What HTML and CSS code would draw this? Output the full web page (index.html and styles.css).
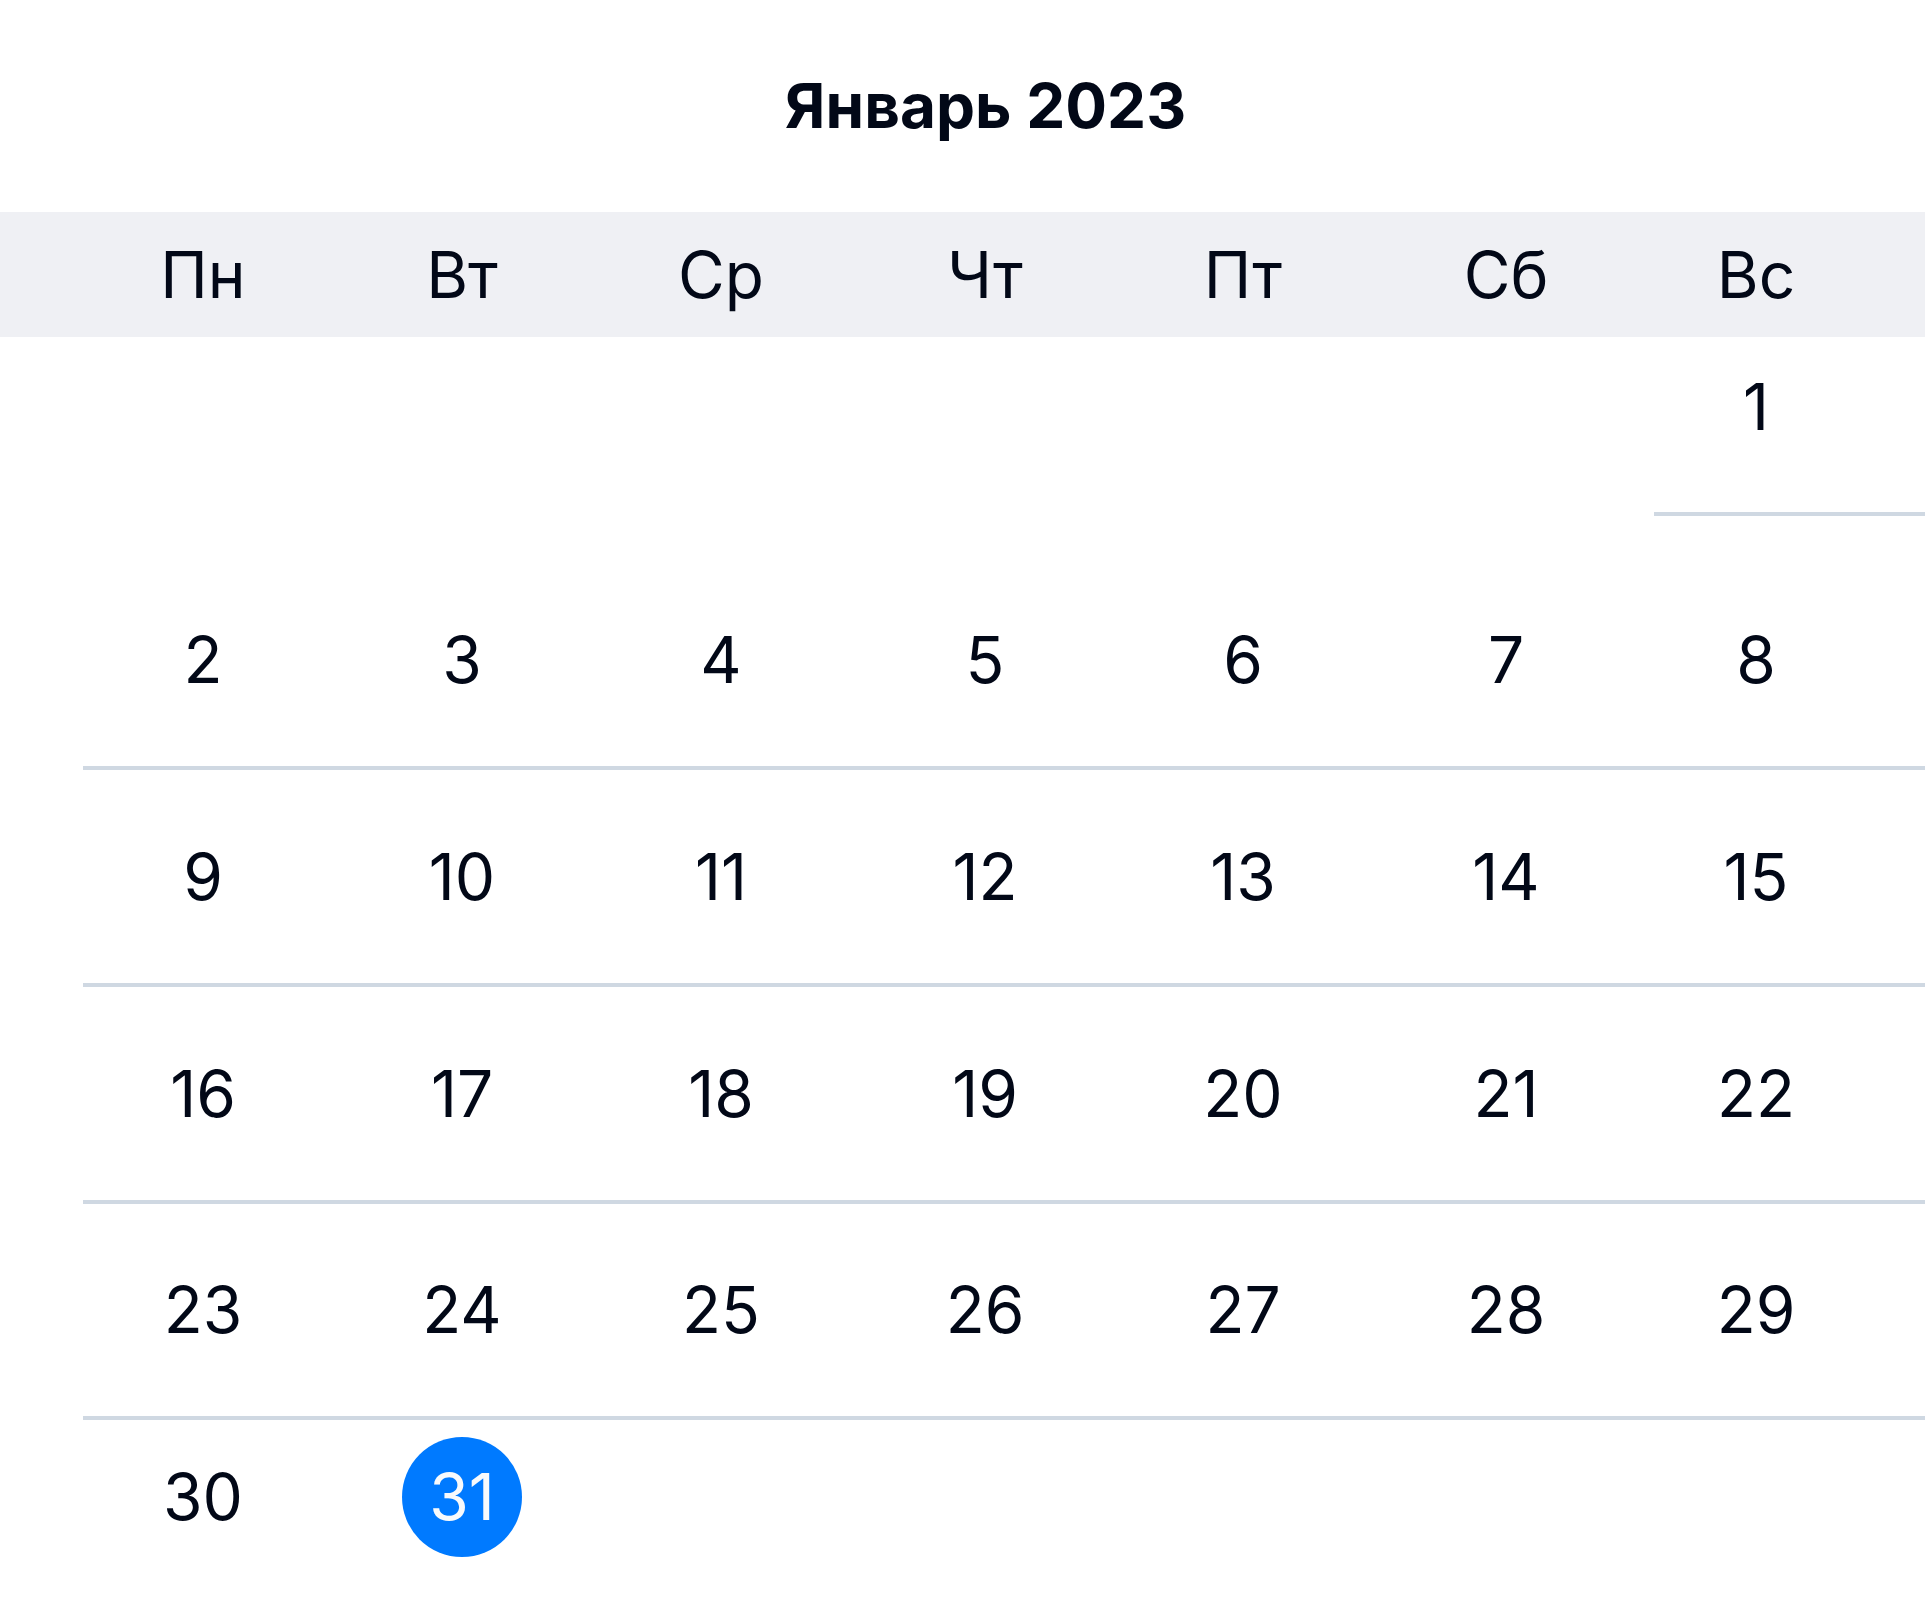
FILE: index.html
```html
<!DOCTYPE html>
<html lang="ru">
<head>
<meta charset="utf-8">
<title>Январь 2023</title>
<link rel="stylesheet" href="styles.css">
</head>
<body>
<div class="calendar">
  <div class="title-bar"><h1 class="title">Январь 2023</h1></div>
  <div class="weekdays">
    <div class="weekdays-grid">
      <div class="wd">Пн</div><div class="wd">Вт</div><div class="wd">Ср</div><div class="wd">Чт</div><div class="wd">Пт</div><div class="wd">Сб</div><div class="wd">Вс</div>
    </div>
  </div>
  <div class="week w1">
    <div class="day"></div><div class="day"></div><div class="day"></div><div class="day"></div><div class="day"></div><div class="day"></div><div class="day">1</div>
  </div>
  <div class="rule rule-short"></div>
  <div class="week w2">
    <div class="day">2</div><div class="day">3</div><div class="day">4</div><div class="day">5</div><div class="day">6</div><div class="day">7</div><div class="day">8</div>
  </div>
  <div class="rule"></div>
  <div class="week w3">
    <div class="day">9</div><div class="day">10</div><div class="day">11</div><div class="day">12</div><div class="day">13</div><div class="day">14</div><div class="day">15</div>
  </div>
  <div class="rule"></div>
  <div class="week w4">
    <div class="day">16</div><div class="day">17</div><div class="day">18</div><div class="day">19</div><div class="day">20</div><div class="day">21</div><div class="day">22</div>
  </div>
  <div class="rule"></div>
  <div class="week w5">
    <div class="day">23</div><div class="day">24</div><div class="day">25</div><div class="day">26</div><div class="day">27</div><div class="day">28</div><div class="day">29</div>
  </div>
  <div class="rule"></div>
  <div class="week w6">
    <div class="day">30</div><div class="day"><span class="today">31</span></div><div class="day"></div><div class="day"></div><div class="day"></div><div class="day"></div><div class="day"></div>
  </div>
</div>
</body>
</html>
```

FILE: styles.css
```css
html, body {
  margin: 0;
  padding: 0;
  background: #ffffff;
}

body {
  font-family: Inter, "Noto Sans", "DejaVu Sans", sans-serif;
  color: #020817;
  overflow: hidden;
}

.calendar {
  width: 1925px;
}

.title-bar {
  padding: 75px 30px 75px 76px;
  text-align: center;
}

.title {
  margin: 0;
  font-size: 62px;
  line-height: 62px;
  font-weight: 700;
  color: #020817;
}

.weekdays {
  background: #eff0f4;
  height: 125px;
}

.weekdays-grid,
.week {
  display: grid;
  grid-template-columns: 260px 258px 260px 268px 248px 278px 222px;
  margin-left: 73px;
}

.weekdays-grid {
  height: 125px;
  align-items: center;
}

.wd {
  text-align: center;
  font-size: 64px;
  line-height: 64px;
  font-weight: 400;
}

.week {
  box-sizing: border-box;
  align-items: center;
}

.day {
  text-align: center;
  font-size: 64px;
  line-height: 64px;
  height: 64px;
  font-weight: 400;
}

.w1 {
  height: 175px;
  padding-top: 38px;
  align-items: start;
}

.w2 {
  margin-top: 38px;
  height: 212px;
}

.w3, .w4 {
  height: 213px;
}

.w5 {
  height: 212px;
}

.w6 {
  padding-top: 17px;
  height: 188px;
  align-items: start;
}

.w6 .day {
  height: 120px;
  display: flex;
  align-items: center;
  justify-content: center;
}

.today {
  display: flex;
  align-items: center;
  justify-content: center;
  width: 120px;
  height: 120px;
  border-radius: 50%;
  background: #007aff;
  color: #f8fafc;
}

.rule {
  height: 4px;
  background: #cfd8e2;
  margin-left: 83px;
}

.rule-short {
  margin-left: 1654px;
}
```
